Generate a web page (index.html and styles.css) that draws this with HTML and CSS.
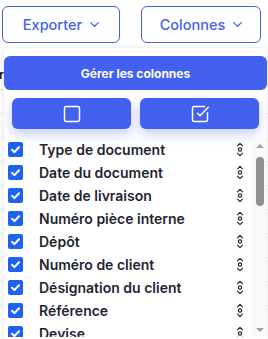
FILE: index.html
```html
<!DOCTYPE html>
<html lang="fr">
<head>
<meta charset="utf-8">
<title>Colonnes</title>
<link rel="stylesheet" href="styles.css">
</head>
<body>
<div class="toolbar">
  <button class="tb-btn tb-exp">Exporter <svg class="chev" width="9" height="5" viewBox="0 0 9 5"><path d="M0.6 0.6 4.5 4.3 8.4 0.6"/></svg></button>
  <button class="tb-btn tb-col">Colonnes <svg class="chev" width="9" height="5" viewBox="0 0 9 5"><path d="M0.6 0.6 4.5 4.3 8.4 0.6"/></svg></button>
</div>

<div class="table">
  <div class="thead"><div class="th-clip"><span>Fournisseur</span></div></div>
  <div class="trow"></div><div class="trow"></div><div class="trow"></div><div class="trow"></div>
  <div class="trow"></div><div class="trow"></div><div class="trow"></div><div class="trow"></div>
  <div class="trow"></div>
</div>

<div class="panel">
  <button class="manage">Gérer les colonnes</button>
  <div class="actions">
    <button class="act" title="Tout désélectionner">
      <svg width="20" height="20" viewBox="0 0 24 24" class="ico"><rect x="3" y="3" width="18" height="18" rx="2"/></svg>
    </button>
    <button class="act" title="Tout sélectionner">
      <svg width="20" height="20" viewBox="0 0 24 24" class="ico"><path d="M21 10.5V19a2 2 0 0 1-2 2H5a2 2 0 0 1-2-2V5a2 2 0 0 1 2-2h12.5"/><path d="m9 11 3 3L22 4"/></svg>
    </button>
  </div>
  <div class="listwrap">
    <ul class="list">
      <li class="item"><span class="cb"><svg width="15" height="15" viewBox="0 0 15 15"><path d="M4 7.8 6.4 10.1 11 5.2"/></svg></span><span class="label">Type de document</span><svg class="drag" width="8" height="15" viewBox="0 0 8 15"><path d="M1.5 3.8 4 1.3 6.5 3.8"/><circle cx="4" cy="7.5" r="1.7"/><path d="M1.5 11.2 4 13.7 6.5 11.2"/></svg></li>
      <li class="item"><span class="cb"><svg width="15" height="15" viewBox="0 0 15 15"><path d="M4 7.8 6.4 10.1 11 5.2"/></svg></span><span class="label">Date du document</span><svg class="drag" width="8" height="15" viewBox="0 0 8 15"><path d="M1.5 3.8 4 1.3 6.5 3.8"/><circle cx="4" cy="7.5" r="1.7"/><path d="M1.5 11.2 4 13.7 6.5 11.2"/></svg></li>
      <li class="item"><span class="cb"><svg width="15" height="15" viewBox="0 0 15 15"><path d="M4 7.8 6.4 10.1 11 5.2"/></svg></span><span class="label">Date de livraison</span><svg class="drag" width="8" height="15" viewBox="0 0 8 15"><path d="M1.5 3.8 4 1.3 6.5 3.8"/><circle cx="4" cy="7.5" r="1.7"/><path d="M1.5 11.2 4 13.7 6.5 11.2"/></svg></li>
      <li class="item"><span class="cb"><svg width="15" height="15" viewBox="0 0 15 15"><path d="M4 7.8 6.4 10.1 11 5.2"/></svg></span><span class="label">Numéro pièce interne</span><svg class="drag" width="8" height="15" viewBox="0 0 8 15"><path d="M1.5 3.8 4 1.3 6.5 3.8"/><circle cx="4" cy="7.5" r="1.7"/><path d="M1.5 11.2 4 13.7 6.5 11.2"/></svg></li>
      <li class="item"><span class="cb"><svg width="15" height="15" viewBox="0 0 15 15"><path d="M4 7.8 6.4 10.1 11 5.2"/></svg></span><span class="label">Dépôt</span><svg class="drag" width="8" height="15" viewBox="0 0 8 15"><path d="M1.5 3.8 4 1.3 6.5 3.8"/><circle cx="4" cy="7.5" r="1.7"/><path d="M1.5 11.2 4 13.7 6.5 11.2"/></svg></li>
      <li class="item"><span class="cb"><svg width="15" height="15" viewBox="0 0 15 15"><path d="M4 7.8 6.4 10.1 11 5.2"/></svg></span><span class="label">Numéro de client</span><svg class="drag" width="8" height="15" viewBox="0 0 8 15"><path d="M1.5 3.8 4 1.3 6.5 3.8"/><circle cx="4" cy="7.5" r="1.7"/><path d="M1.5 11.2 4 13.7 6.5 11.2"/></svg></li>
      <li class="item"><span class="cb"><svg width="15" height="15" viewBox="0 0 15 15"><path d="M4 7.8 6.4 10.1 11 5.2"/></svg></span><span class="label">Désignation du client</span><svg class="drag" width="8" height="15" viewBox="0 0 8 15"><path d="M1.5 3.8 4 1.3 6.5 3.8"/><circle cx="4" cy="7.5" r="1.7"/><path d="M1.5 11.2 4 13.7 6.5 11.2"/></svg></li>
      <li class="item"><span class="cb"><svg width="15" height="15" viewBox="0 0 15 15"><path d="M4 7.8 6.4 10.1 11 5.2"/></svg></span><span class="label">Référence</span><svg class="drag" width="8" height="15" viewBox="0 0 8 15"><path d="M1.5 3.8 4 1.3 6.5 3.8"/><circle cx="4" cy="7.5" r="1.7"/><path d="M1.5 11.2 4 13.7 6.5 11.2"/></svg></li>
      <li class="item"><span class="cb"><svg width="15" height="15" viewBox="0 0 15 15"><path d="M4 7.8 6.4 10.1 11 5.2"/></svg></span><span class="label">Devise</span><svg class="drag" width="8" height="15" viewBox="0 0 8 15"><path d="M1.5 3.8 4 1.3 6.5 3.8"/><circle cx="4" cy="7.5" r="1.7"/><path d="M1.5 11.2 4 13.7 6.5 11.2"/></svg></li>
      <li class="item"><span class="cb"><svg width="15" height="15" viewBox="0 0 15 15"><path d="M4 7.8 6.4 10.1 11 5.2"/></svg></span><span class="label">Montant HT</span><svg class="drag" width="8" height="15" viewBox="0 0 8 15"><path d="M1.5 3.8 4 1.3 6.5 3.8"/><circle cx="4" cy="7.5" r="1.7"/><path d="M1.5 11.2 4 13.7 6.5 11.2"/></svg></li>
    </ul>
    <div class="sb">
      <div class="sb-btn"><span class="tri-up"></span></div>
      <div class="sb-track"><div class="sb-thumb"></div></div>
      <div class="sb-btn"><span class="tri-down"></span></div>
    </div>
  </div>
</div>
</body>
</html>
```

FILE: styles.css
```css
* { box-sizing: border-box; }

html, body {
  margin: 0;
  padding: 0;
  width: 268px;
  height: 339px;
  overflow: hidden;
  background: #ffffff;
  font-family: Inter, "Noto Sans", "Liberation Sans", sans-serif;
}

body { position: relative; }

.toolbar {
  display: flex;
  gap: 21px;
  padding: 6px 0 0 2px;
}

.tb-btn {
  height: 37px;
  display: flex;
  align-items: center;
  justify-content: center;
  gap: 8px;
  background: #fff;
  border: 1px solid #4361ee;
  border-radius: 6px;
  color: #4361ee;
  font-family: Inter, "Liberation Sans", sans-serif;
  font-size: 14.5px;
  font-weight: 500;
  padding: 0;
}

.tb-exp { width: 118px; }
.tb-col { width: 120px; }

.chev {
  fill: none;
  stroke: #4361ee;
  stroke-width: 1.2;
  stroke-linecap: round;
  stroke-linejoin: round;
}

.table {
  margin-top: 17px;
}

.thead {
  height: 30px;
  display: flex;
  align-items: center;
  border-bottom: 1px solid #ebebeb;
}

.th-clip {
  width: 4px;
  overflow: hidden;
  display: flex;
  justify-content: flex-end;
  white-space: nowrap;
  font-size: 12px;
  font-weight: 700;
  color: #222;
}

.trow {
  height: 24px;
  border-bottom: 1px solid #efefef;
}

.panel {
  position: absolute;
  left: 4px;
  top: 48px;
  width: 263px;
  height: 291px;
  overflow: hidden;
  background: #ffffff;
  border-radius: 4px 4px 0 0;
  box-shadow: 0 1px 6px rgba(0, 0, 0, 0.12);
}

.manage {
  display: block;
  width: 100%;
  height: 34px;
  margin-top: 8px;
  border: none;
  border-radius: 6px;
  background: #4361ee;
  color: #ffffff;
  font-family: Inter, "Liberation Sans", sans-serif;
  font-size: 12px;
  font-weight: 700;
  padding: 0;
}

.actions {
  display: flex;
  gap: 9px;
  padding: 8px 8px 0;
}

.act {
  flex: 1;
  height: 31px;
  border: none;
  border-radius: 6px;
  background: #4361ee;
  display: flex;
  align-items: center;
  justify-content: center;
  padding: 0;
  box-shadow: 0 5px 12px rgba(67, 97, 238, 0.3);
}

.ico {
  fill: none;
  stroke: #ffffff;
  stroke-width: 1.8;
  stroke-linecap: round;
  stroke-linejoin: round;
}

.listwrap {
  margin-top: 9px;
  height: 199px;
  display: flex;
}

.list {
  flex: 1;
  margin: 0;
  padding: 0 8px 0 4px;
  list-style: none;
  overflow: hidden;
}

.item {
  height: 23px;
  display: flex;
  align-items: center;
}

.cb {
  width: 15px;
  height: 15px;
  border-radius: 2px;
  background: #1f62f2;
  margin-right: 16px;
  flex: none;
  display: flex;
}

.cb svg {
  fill: none;
  stroke: #ffffff;
  stroke-width: 2;
  stroke-linecap: round;
  stroke-linejoin: round;
}

.label {
  flex: 1;
  white-space: nowrap;
  font-size: 14px;
  font-weight: 600;
  color: #1f2533;
}

.drag {
  flex: none;
  fill: none;
  stroke: #1f2533;
  stroke-width: 1.2;
  stroke-linecap: round;
  stroke-linejoin: round;
}

.sb {
  width: 15px;
  flex: none;
  display: flex;
  flex-direction: column;
  background: #f9f9f9;
}

.sb-btn {
  height: 15px;
  display: flex;
  align-items: center;
  justify-content: center;
}

.tri-up {
  width: 0;
  height: 0;
  border-left: 4px solid transparent;
  border-right: 4px solid transparent;
  border-bottom: 4px solid #a3a3a3;
}

.tri-down {
  width: 0;
  height: 0;
  border-left: 4px solid transparent;
  border-right: 4px solid transparent;
  border-top: 4px solid #a3a3a3;
}

.sb-track {
  flex: 1;
  padding-top: 4px;
}

.sb-thumb {
  width: 8px;
  height: 49px;
  margin: 0 auto;
  border-radius: 4px;
  background: #8f8f8f;
}
```
